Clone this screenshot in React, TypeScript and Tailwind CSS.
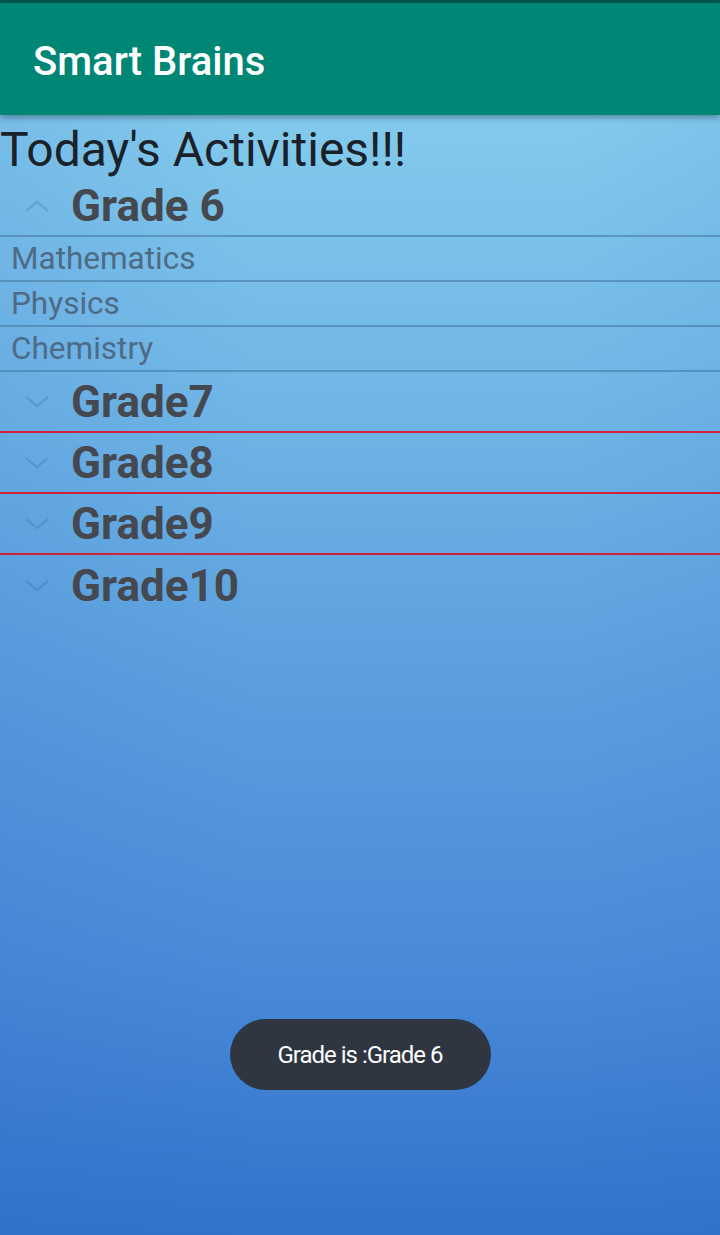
import { ReactNode } from "react";

const font = { fontFamily: "Roboto, 'Noto Sans', sans-serif" };

function Chevron({ up }: { up?: boolean }) {
  return (
    <svg width="26" height="16" viewBox="0 0 26 16" className="shrink-0">
      <polyline
        points={up ? "2,13 13,4 24,13" : "2,3 13,12 24,3"}
        fill="none"
        stroke="rgba(40,70,110,0.2)"
        strokeWidth="2.2"
      />
    </svg>
  );
}

function GroupRow({ label, up, red, line }: { label: string; up?: boolean; red?: boolean; line?: boolean }) {
  return (
    <div
      className={`flex h-[61px] items-center ${red ? "border-b-2 border-[#cf2238]" : ""} ${
        line ? "border-b-2 border-[#4c82ad]/70" : ""
      }`}
    >
      <div className="flex w-[71px] justify-center pl-[2px]">
        <Chevron up={up} />
      </div>
      <span className="text-[44px] font-bold leading-none text-[#45484e]">{label}</span>
    </div>
  );
}

function Child({ children }: { children: ReactNode }) {
  return (
    <div className="flex h-[45px] items-center border-b-2 border-[#4c82ad]/70 pl-[11px] text-[31.5px] text-[#4f6a85]">
      {children}
    </div>
  );
}

export default function App() {
  return (
    <div
      style={font}
      className="flex h-[1235px] w-[720px] flex-col overflow-hidden bg-[linear-gradient(180deg,#8ad2ef_0%,#72b8e7_30%,#5b9fde_55%,#4a8ad8_78%,#3073cc_100%)]"
    >
      <div className="h-[3px] bg-[#00574b]" />
      <header className="z-10 flex h-[112px] items-center bg-[#008675] pl-[33px] pt-[5px] shadow-[0_3px_6px_rgba(0,0,0,0.3)]">
        <h1 className="text-[40px] font-medium text-white">Smart Brains</h1>
      </header>
      <div className="flex flex-1 flex-col bg-[linear-gradient(90deg,rgba(40,100,200,0.12)_0%,rgba(40,100,200,0)_35%,rgba(40,100,200,0)_80%,rgba(40,100,200,0.06)_100%)]">
        <h2 className="mt-[9px] h-[52px] text-[48px] leading-[52px] text-[#1b2128]">
          Today's Activities!!!
        </h2>
        <GroupRow label="Grade 6" up line />
        <Child>Mathematics</Child>
        <Child>Physics</Child>
        <Child>Chemistry</Child>
        <GroupRow label="Grade7" red />
        <GroupRow label="Grade8" red />
        <GroupRow label="Grade9" red />
        <GroupRow label="Grade10" />

        <div className="mt-[403px] flex justify-center">
          <div className="flex h-[71px] w-[261px] items-center justify-center rounded-full bg-[#2f3641] text-[24px] tracking-[-1px] text-white">
            Grade is :Grade 6
          </div>
        </div>
      </div>
    </div>
  );
}
